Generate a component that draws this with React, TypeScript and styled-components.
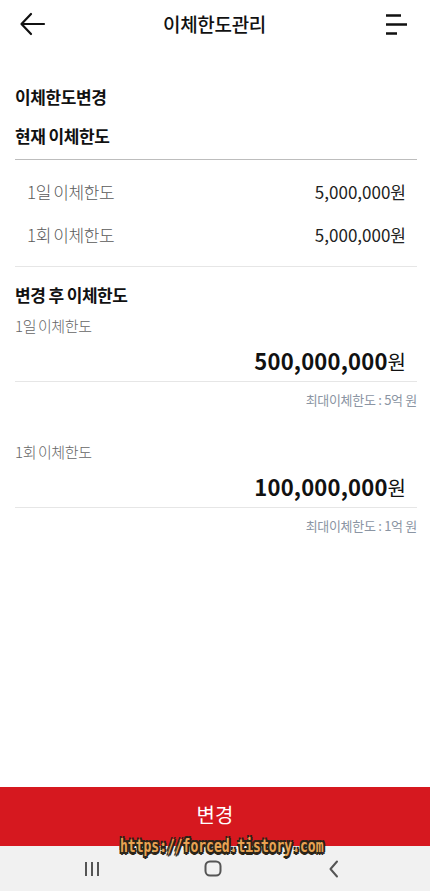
import React from 'react';
import styled, {createGlobalStyle} from 'styled-components';

const GlobalStyle = createGlobalStyle`
	html, body {
		margin: 0;
		padding: 0;
		background: #fff;
	}
	body {
		font-family: 'Noto Sans CJK KR', 'Noto Sans', sans-serif;
		color: #111;
	}
`;

type Limit = {label: string; amount: string; max: string};

const current = [
	{label: '1일 이체한도', value: '5,000,000원'},
	{label: '1회 이체한도', value: '5,000,000원'},
];

const next: Limit[] = [
	{label: '1일 이체한도', amount: '500,000,000', max: '최대이체한도 : 5억 원'},
	{label: '1회 이체한도', amount: '100,000,000', max: '최대이체한도 : 1억 원'},
];

const App = () => {
	return (
		<>
			<GlobalStyle />
			<Page>
				<Header>
					<IconButton aria-label='뒤로'>
						<svg width='28' height='28' viewBox='0 0 28 28' fill='none'>
							<path
								d='M25 14H3M12 4L2.5 14L12 24'
								stroke='#111'
								strokeWidth='2.2'
								strokeLinecap='round'
								strokeLinejoin='round'
							/>
						</svg>
					</IconButton>
					<Title>이체한도관리</Title>
					<IconButton aria-label='메뉴'>
						<svg width='24' height='24' viewBox='0 0 24 24' fill='none'>
							<path
								d='M2 3.5H17M2 12.5H23M2 21.5H13'
								stroke='#111'
								strokeWidth='2.4'
							/>
						</svg>
					</IconButton>
				</Header>

				<Content>
					<SectionTitle>이체한도변경</SectionTitle>
					<SectionTitle $gap={15}>현재 이체한도</SectionTitle>
					<Divider $strong />
					<CurrentList>
						{current.map((row) => (
							<CurrentRow key={row.label}>
								<RowLabel>{row.label}</RowLabel>
								<RowValue>{row.value}</RowValue>
							</CurrentRow>
						))}
					</CurrentList>
					<Divider />
					<SectionTitle $gap={16}>변경 후 이체한도</SectionTitle>
					{next.map((item, i) => (
						<LimitBlock key={item.label} $first={i === 0}>
							<LimitLabel>{item.label}</LimitLabel>
							<Amount>
								<strong>{item.amount}</strong>원
							</Amount>
							<Divider />
							<MaxNote>{item.max}</MaxNote>
						</LimitBlock>
					))}
				</Content>

				<SubmitButton>변경</SubmitButton>

				<NavBar>
					<svg width='18' height='16' viewBox='0 0 18 16' fill='none'>
						<path d='M3 1V15M9 1V15M15 1V15' stroke='#555' strokeWidth='2' />
					</svg>
					<svg width='18' height='17' viewBox='0 0 18 17' fill='none'>
						<rect
							x='1.5'
							y='1.5'
							width='15'
							height='14'
							rx='4.5'
							stroke='#555'
							strokeWidth='2'
						/>
					</svg>
					<svg width='12' height='18' viewBox='0 0 12 18' fill='none'>
						<path
							d='M9 1.5L2.5 9L9 16.5'
							stroke='#555'
							strokeWidth='2'
							strokeLinecap='round'
							strokeLinejoin='round'
						/>
					</svg>
					<Watermark>https://forced.tistory.com</Watermark>
				</NavBar>
			</Page>
		</>
	);
};

export default App;

const Page = styled.div`
	display: flex;
	flex-direction: column;
	min-height: 891px;
	width: 430px;
	background: #fff;
`;

const Header = styled.header`
	height: 48px;
	display: flex;
	align-items: center;
	justify-content: space-between;
	padding: 0 20px 0 19px;
`;

const IconButton = styled.button`
	border: none;
	background: none;
	padding: 0;
	width: 28px;
	height: 28px;
	display: flex;
	align-items: center;
	justify-content: center;
`;

const Title = styled.h1`
	margin: 0;
	font-size: 19px;
	line-height: 26px;
	font-weight: 500;
	color: #111;
	letter-spacing: -0.3px;
`;

const Content = styled.main`
	flex: 1;
	padding: 37px 13px 0 15px;
`;

const SectionTitle = styled.h2<{$gap?: number}>`
	margin: ${(p) => p.$gap ?? 0}px 0 0;
	font-size: 17px;
	line-height: 24px;
	font-weight: 700;
	color: #111;
	letter-spacing: -0.4px;
	word-spacing: -0.5px;
`;

const Divider = styled.hr<{$strong?: boolean}>`
	margin: ${(p) => (p.$strong ? '11px 0 0' : '0')};
	border: none;
	height: 1px;
	background: ${(p) => (p.$strong ? '#bdbdbd' : '#e6e6e6')};
`;

const CurrentList = styled.div`
	padding: 10px 11px 10px 12px;
`;

const CurrentRow = styled.div`
	height: 43px;
	display: flex;
	align-items: center;
	justify-content: space-between;
`;

const RowLabel = styled.span`
	font-size: 17px;
	line-height: 24px;
	font-weight: 300;
	color: #5a5a5a;
	letter-spacing: -0.4px;
	word-spacing: -1px;
`;

const RowValue = styled.span`
	font-size: 17px;
	line-height: 24px;
	color: #222;
	letter-spacing: 0;
`;

const LimitBlock = styled.section<{$first?: boolean}>`
	margin-top: ${(p) => (p.$first ? 9 : 33)}px;
`;

const LimitLabel = styled.div`
	font-size: 15px;
	line-height: 20px;
	font-weight: 300;
	color: #666;
	letter-spacing: -0.4px;
	word-spacing: -1px;
`;

const Amount = styled.div`
	margin-top: 9px;
	margin-bottom: 6px;
	padding-right: 11px;
	text-align: right;
	font-size: 20px;
	line-height: 30px;
	height: 30px;
	color: #111;

	strong {
		font-size: 22px;
		font-weight: 700;
		letter-spacing: 0.2px;
	}
`;

const MaxNote = styled.div`
	margin-top: 9px;
	text-align: right;
	font-size: 13px;
	line-height: 18px;
	color: #8b95a3;
	letter-spacing: -0.3px;
`;

const SubmitButton = styled.button`
	height: 59px;
	border: none;
	background: #d6181f;
	color: #fff;
	font-family: inherit;
	font-size: 20px;
	font-weight: 400;
	padding: 0 0 4px;
`;

const NavBar = styled.nav`
	position: relative;
	height: 45px;
	background: #f1f1f1;
	display: grid;
	grid-template-columns: repeat(3, 121px);
	justify-content: center;
	justify-items: center;
	align-items: center;
	padding-right: 4px;
`;

const Watermark = styled.span`
	position: absolute;
	left: 120px;
	top: -7px;
	font-family: 'DejaVu Sans Mono', monospace;
	font-size: 13px;
	font-weight: 700;
	color: #e8a352;
	transform: scaleY(1.3);
	text-shadow:
		-1.5px -1.5px 0 #2a2418,
		1.5px -1.5px 0 #2a2418,
		-1.5px 1.5px 0 #2a2418,
		1.5px 1.5px 0 #2a2418,
		0 2px 0 #2a2418,
		2px 0 0 #2a2418;
`;
